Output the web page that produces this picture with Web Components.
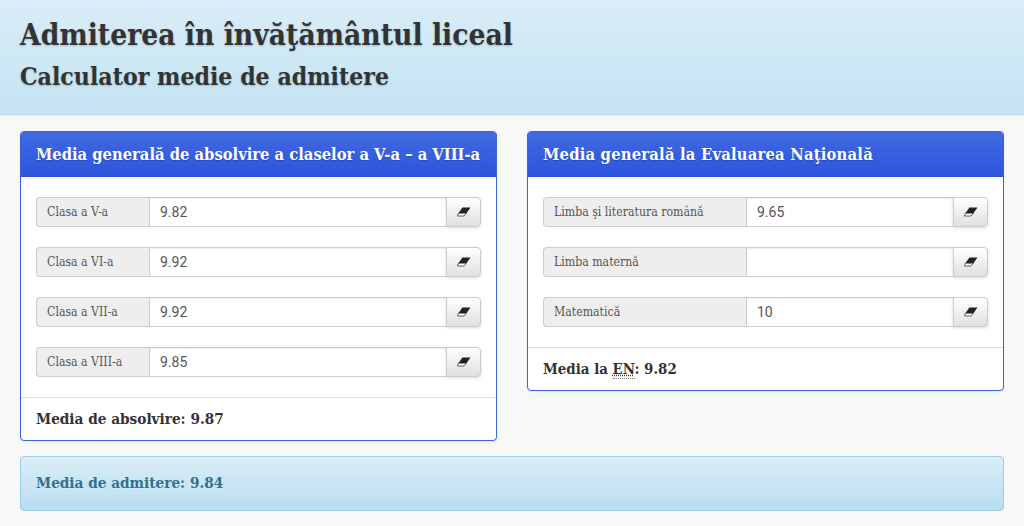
<!DOCTYPE html>
<html lang="ro">
<head>
<meta charset="utf-8">
<title>Calculator medie de admitere</title>
<style>
  html, body { margin: 0; padding: 0; }
  body { background: #f8f8f8; color: #333; font-family: "DejaVu Serif Condensed", "DejaVu Serif", serif; }
  abbr { text-decoration: underline dotted; border-bottom: 1px dotted #777; }
</style>
</head>
<body>
<page-header>
  <span slot="title">Admiterea în învăţământul liceal</span>
  <span slot="sub">Calculator medie de admitere</span>
</page-header>
<main-grid>
  <calc-panel heading="Media generală de absolvire a claselor a V-a – a VIII-a" style="--label-w:113px">
    <grade-row label="Clasa a V-a" value="9.82"></grade-row>
    <grade-row label="Clasa a VI-a" value="9.92"></grade-row>
    <grade-row label="Clasa a VII-a" value="9.92"></grade-row>
    <grade-row label="Clasa a VIII-a" value="9.85"></grade-row>
    <span slot="footer">Media de absolvire: 9.87</span>
  </calc-panel>
  <calc-panel heading="Media generală la Evaluarea Naţională" style="--label-w:203px;--head-ls:.22px;--foot-size:14.9px">
    <grade-row label="Limba şi literatura română" value="9.65"></grade-row>
    <grade-row label="Limba maternă" value=""></grade-row>
    <grade-row label="Matematică" value="10"></grade-row>
    <span slot="footer">Media la <abbr title="Evaluarea Naţională">EN</abbr>: 9.82</span>
  </calc-panel>
</main-grid>
<result-box>Media de admitere: 9.84</result-box>

<script>
  // header band with the two titles
  class PageHeader extends HTMLElement {
    constructor() {
      super();
      this.attachShadow({ mode: 'open' }).innerHTML = `
        <style>
          :host { display: block; height: 116px; box-sizing: border-box; padding: 17px 20px 0;
            background: linear-gradient(#d9edf7, #c4e3f3); border-bottom: 1px solid #e4e8ea; }
          div { font-weight: bold; white-space: nowrap; color: #333; text-shadow: 0 1px 2px rgba(0,0,0,.2); }
          .t { font-size: 29.7px; line-height: 36px; }
          .s { font-size: 24.6px; line-height: 32px; margin-top: 8px; }
        </style>
        <div class="t"><slot name="title"></slot></div>
        <div class="s"><slot name="sub"></slot></div>`;
    }
  }

  class MainGrid extends HTMLElement {
    constructor() {
      super();
      this.attachShadow({ mode: 'open' }).innerHTML = `
        <style>
          :host { display: grid; grid-template-columns: 477px 477px; column-gap: 30px; align-items: start;
            padding: 15px 20px 0; }
        </style>
        <slot></slot>`;
    }
  }

  class CalcPanel extends HTMLElement {
    constructor() {
      super();
      this.attachShadow({ mode: 'open' }).innerHTML = `
        <style>
          :host { display: block; background: #fff; border: 1px solid #3b62dd; border-radius: 4px;
            box-shadow: 0 1px 2px rgba(0,0,0,.08); overflow: hidden; }
          .head { height: 45px; box-sizing: border-box; padding: 0 15px; display: flex; align-items: center;
            background: linear-gradient(#4169e1, #2c55dc); color: #fff; font-weight: bold;
            font-size: 16.4px; letter-spacing: var(--head-ls, 0); white-space: nowrap; text-shadow: 0 1px 1px rgba(0,0,0,.2); }
          .body { padding: 20px 15px; display: flex; flex-direction: column; gap: 20px; }
          .foot { height: 43px; box-sizing: border-box; border-top: 1px solid #ddd; padding: 0 15px;
            display: flex; align-items: center; font-weight: bold; white-space: pre;
            font-size: var(--foot-size, 15.2px); color: #333; }
        </style>
        <div class="head"></div>
        <div class="body"><slot></slot></div>
        <div class="foot"><slot name="footer"></slot></div>`;
    }
    connectedCallback() {
      this.shadowRoot.querySelector('.head').textContent = this.getAttribute('heading');
    }
  }

  class GradeRow extends HTMLElement {
    constructor() {
      super();
      this.attachShadow({ mode: 'open' }).innerHTML = `
        <style>
          :host { display: flex; height: 30px; box-sizing: border-box; font-family: "Roboto", sans-serif; }
          .label { flex: none; width: var(--label-w); display: flex; align-items: center; box-sizing: border-box; padding: 0 10px;
            font: 12.2px "DejaVu Serif Condensed", "DejaVu Serif", serif; color: #555; background: #eee; border: 1px solid #ccc; border-right: 0;
            border-radius: 4px 0 0 4px; white-space: nowrap; }
          input { flex: 1; min-width: 0; box-sizing: border-box; height: 30px; margin: 0; padding: 0 10px;
            border: 1px solid #ccc; font: 14px "Roboto", sans-serif; color: #555; background: #fff; outline: 0;
            box-shadow: inset 0 1px 1px rgba(0,0,0,.075); border-radius: 0; }
          button { flex: none; width: 35px; height: 30px; box-sizing: border-box; margin: 0 0 0 -1px; padding: 0;
            display: flex; align-items: center; justify-content: center;
            border: 1px solid #ccc; border-radius: 0 4px 4px 0;
            background: linear-gradient(#fff, #e0e0e0); box-shadow: 0 1px 3px rgba(0,0,0,.15); }
        </style>
        <span class="label"></span>
        <input type="text">
        <button type="button" aria-label="Șterge">
          <svg width="14" height="10" viewBox="0 0 14 10">
            <path d="M5.4 .5H13.5L9.4 6.2H1.4Z" fill="#222"/>
            <path d="M1.4 6.2H9.4L7 9H.5Z" fill="#fff" stroke="#222" stroke-width=".7"/>
          </svg>
        </button>`;
    }
    connectedCallback() {
      this.shadowRoot.querySelector('.label').textContent = this.getAttribute('label');
      this.shadowRoot.querySelector('input').value = this.getAttribute('value');
    }
  }

  class ResultBox extends HTMLElement {
    constructor() {
      super();
      this.attachShadow({ mode: 'open' }).innerHTML = `
        <style>
          :host { display: flex; align-items: center; height: 55px; box-sizing: border-box; margin: 15px 20px 0;
            padding: 0 15px 1px; background: linear-gradient(#d9edf7, #b9def0); border: 1px solid #9acfea;
            border-radius: 4px; color: #31708f; font-weight: bold; font-size: 15.2px;
            text-shadow: 0 1px 0 rgba(255,255,255,.2); }
        </style>
        <slot></slot>`;
    }
  }

  customElements.define('page-header', PageHeader);
  customElements.define('main-grid', MainGrid);
  customElements.define('calc-panel', CalcPanel);
  customElements.define('grade-row', GradeRow);
  customElements.define('result-box', ResultBox);
</script>
</body>
</html>
